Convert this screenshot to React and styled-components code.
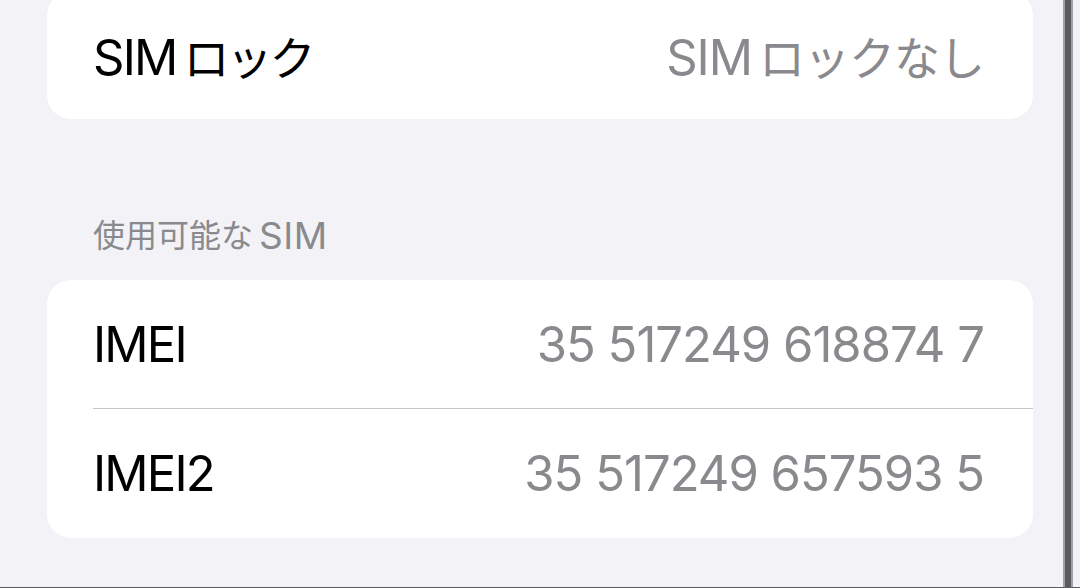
import React from 'react';
import styled, { createGlobalStyle } from 'styled-components';

const GlobalStyle = createGlobalStyle`
  html, body {
    margin: 0;
    padding: 0;
    background: #f2f2f7;
    overflow: hidden;
  }
  body {
    font-family: Inter, "Noto Sans CJK JP", sans-serif;
    -webkit-font-smoothing: antialiased;
  }
`;

const Screen = styled.div`
  width: 1080px;
  height: 588px;
  display: flex;
  overflow: hidden;
  background: #f2f2f7;
  border-bottom: 1px solid #5c5c61;
  box-sizing: border-box;
`;

const Content = styled.div`
  flex: none;
  width: 1033px;
  padding-left: 47px;
  box-sizing: border-box;
  margin-top: -9px;
`;

const Gutter = styled.div`
  flex: none;
  width: 30px;
`;

const ScrollEdge = styled.div`
  flex: none;
  width: 10px;
  box-sizing: border-box;
  background: #5a5a5f;
  box-shadow: inset 2px 0 0 #a0a0a5, inset -2px 0 0 #a0a0a5;
`;

const Card = styled.div`
  background: #ffffff;
  border-radius: 24px;
  overflow: hidden;
`;

const Row = styled.div`
  height: ${(props) => props.h || 128}px;
  display: flex;
  align-items: center;
  justify-content: space-between;
  padding: 0 49px 0 46px;
  box-sizing: border-box;
`;

const Label = styled.span`
  font-size: 49px;
  color: #000;
  letter-spacing: -1.8px;
`;

const Value = styled.span`
  font-size: 49px;
  color: #8a8a8e;
  letter-spacing: -1px;
`;

const Kana = styled.span`
  font-size: ${(props) => props.size || 46}px;
  letter-spacing: ${(props) => props.spacing ?? -2}px;
  margin-left: ${(props) => props.gap || 0}px;
  margin-right: ${(props) => props.after || 0}px;
`;

const Separator = styled.div`
  height: 1px;
  margin-left: 46px;
  background: #c6c6c8;
`;

const SectionHeader = styled.div`
  height: 161px;
  display: flex;
  align-items: flex-end;
  padding: 0 0 22px 46px;
  box-sizing: border-box;
  font-size: 37px;
  line-height: 44px;
  color: #8a8a8e;
  letter-spacing: 0.5px;
`;

export default function App() {
  return (
    <>
      <GlobalStyle />
      <Screen>
        <Content>
          <Card>
            <Row>
              <Label>
                SIM<Kana gap={7} spacing={-3}>ロック</Kana>
              </Label>
              <Value>
                SIM<Kana gap={7} spacing={-1}>ロックなし</Kana>
              </Value>
            </Row>
          </Card>
          <SectionHeader>
            <Kana size={32} spacing={0} after={6}>使用可能な</Kana>SIM
          </SectionHeader>
          <Card>
            <Row>
              <Label>IMEI</Label>
              <Value>35 517249 618874 7</Value>
            </Row>
            <Separator />
            <Row h={129}>
              <Label>IMEI2</Label>
              <Value>35 517249 657593 5</Value>
            </Row>
          </Card>
        </Content>
        <Gutter />
        <ScrollEdge />
      </Screen>
    </>
  );
}
